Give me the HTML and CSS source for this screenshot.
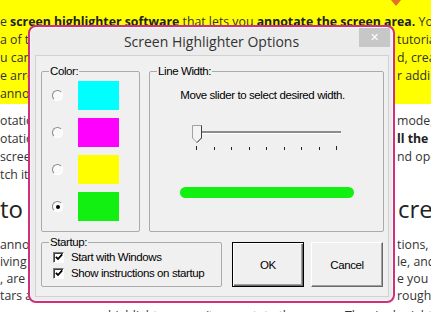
FILE: index.html
```html
<!DOCTYPE html>
<html lang="en">
<head>
  <meta charset="UTF-8">
  <title>Screen Highlighter Options</title>
  <link rel="stylesheet" href="styles.css">
</head>
<body>
  <div class="page">
    <div class="arrow"></div>

    <!-- article behind the dialog -->
    <div class="hilite">
      <p class="ln full">e <b>screen highlighter software</b> that lets you <b>annotate the screen area.</b> You</p>
      <p class="ln"><span>a of the screen</span><span class="r">tutorial</span></p>
      <p class="ln"><span>u can draw</span><span class="r">d, create</span></p>
      <p class="ln"><span>e arrows</span><span class="r">r adding</span></p>
      <p class="ln"><span>annotations</span></p>
    </div>

    <div class="para first">
      <p class="ln"><span>otation mode</span><span class="r">mode,</span></p>
      <p class="ln"><span>otation</span><b class="r">ll the</b></p>
      <p class="ln"><span>screen</span><span class="r">nd open</span></p>
      <p class="ln"><span>tch it</span></p>
    </div>

    <h2 class="ln head"><span>to use</span><span class="r">creen</span></h2>

    <div class="para third">
      <p class="ln"><span>annotate</span><span class="r">tions,</span></p>
      <p class="ln"><span>iving the</span><span class="r">le, and</span></p>
      <p class="ln"><span>, are the</span><span class="r">e you</span></p>
      <p class="ln"><span>tars a</span><span class="r">rough</span></p>
      <p class="ln full last">highlighter users/to annotate the screen. The single right-b</p>
    </div>

    <!-- options dialog -->
    <div class="dialog">
      <div class="titlebar">
        <span></span>
        <span class="title">Screen Highlighter Options</span>
        <span class="close">&#x2715;</span>
      </div>

      <div class="client">
        <div class="top-row">
          <fieldset class="group colors">
            <legend>Color:</legend>
            <div class="swatch-row"><span class="radio"></span><span class="swatch cyan"></span></div>
            <div class="swatch-row"><span class="radio"></span><span class="swatch magenta"></span></div>
            <div class="swatch-row"><span class="radio"></span><span class="swatch yellow"></span></div>
            <div class="swatch-row"><span class="radio on"></span><span class="swatch green"></span></div>
          </fieldset>

          <fieldset class="group width">
            <legend>Line Width:</legend>
            <p class="hint">Move slider to select desired width.</p>
            <svg class="slider" width="233" height="30" viewBox="0 0 233 30">
              <rect x="51" y="9" width="140" height="2" fill="#8c8c8c"/>
              <rect x="51" y="11" width="140" height="1" fill="#ffffff"/>
              <g fill="#222">
                <rect x="46" y="24" width="1" height="4"/>
                <rect x="64" y="25" width="1" height="3"/>
                <rect x="81" y="25" width="1" height="3"/>
                <rect x="99" y="25" width="1" height="3"/>
                <rect x="116" y="25" width="1" height="3"/>
                <rect x="134" y="25" width="1" height="3"/>
                <rect x="151" y="25" width="1" height="3"/>
                <rect x="169" y="25" width="1" height="3"/>
                <rect x="186" y="24" width="1" height="4"/>
              </g>
              <polygon points="42.5,3.5 51.5,3.5 51.5,16 47,20.5 42.5,16" fill="#f4f4f4" stroke="#a0a0a0"/>
              <polyline points="51.5,3.5 51.5,16 47,20.5" fill="none" stroke="#404040"/>
            </svg>
            <div class="bar"></div>
          </fieldset>
        </div>

        <div class="bottom-row">
          <fieldset class="group startup">
            <legend>Startup:</legend>
            <label class="check"><span class="box"><svg width="8" height="8" viewBox="0 0 8 8"><polyline points="0.8,3.8 3,6 7.2,1.4" fill="none" stroke="#000" stroke-width="1.8"/></svg></span>Start with Windows</label>
            <label class="check"><span class="box"><svg width="8" height="8" viewBox="0 0 8 8"><polyline points="0.8,3.8 3,6 7.2,1.4" fill="none" stroke="#000" stroke-width="1.8"/></svg></span>Show instructions on startup</label>
          </fieldset>
          <button class="btn default">OK</button>
          <button class="btn">Cancel</button>
        </div>
      </div>
    </div>
  </div>
</body>
</html>
```

FILE: styles.css
```css
* {
  margin: 0;
  padding: 0;
  box-sizing: border-box;
}

body {
  background: #fff;
}

.page {
  position: relative;
  width: 431px;
  height: 312px;
  overflow: hidden;
  font-family: 'Open Sans', 'Liberation Sans', sans-serif;
  font-size: 12.3px;
  color: #333;
}

.arrow {
  position: absolute;
  left: 391px;
  top: 0;
  width: 0;
  height: 0;
  border-left: 5px solid transparent;
  border-right: 5px solid transparent;
  border-top: 6px solid #e4702c;
}

/* article text */
.ln {
  display: flex;
  height: 18px;
  line-height: 18px;
  white-space: nowrap;
}

.ln.full {
  display: block;
}

.ln .r {
  margin-left: auto;
  width: 34px;
}

.ln b {
  color: #222;
}

.hilite {
  background: #ffff00;
  padding: 13px 0 1px;
  height: 104px;
}

.para.first {
  margin-top: 8px;
}

.head {
  margin-top: 11px;
  height: 28px;
  line-height: 28px;
  font-size: 24px;
  font-weight: 400;
  color: #222;
}

.head .r {
  width: 33px;
}

.para.third {
  margin-top: 13px;
}

.third .ln {
  height: 17px;
  line-height: 17px;
}

.ln.last {
  margin-top: 3px;
  padding-left: 108px;
}

/* dialog */
.dialog {
  position: absolute;
  left: 28px;
  top: 25px;
  width: 367px;
  height: 278px;
  border: 2px solid #cf2f7c;
  border-radius: 8px;
  background: #ececec;
  box-shadow: inset 0 0 0 1px #f8f8f8;
  display: flex;
  flex-direction: column;
}

.titlebar {
  height: 28px;
  display: grid;
  grid-template-columns: 1fr auto 1fr;
  align-items: start;
}

.title {
  font-family: 'Open Sans', sans-serif;
  font-size: 14px;
  color: #333;
  line-height: 28px;
  padding-top: 1px;
}

.close {
  justify-self: end;
  margin: 1px 3px 0 0;
  width: 31px;
  height: 19px;
  background: #c7c7c7;
  color: #fff;
  font-size: 11px;
  line-height: 19px;
  text-align: center;
  font-weight: 700;
  font-family: 'DejaVu Sans', sans-serif;
}

.client {
  flex: 1;
  margin: 0 4px 4px 5px;
  border: 1px solid #d2d2d2;
  background: #f0f0f0;
  padding: 9px 4px 0 5px;
  font-family: 'Liberation Sans', sans-serif;
  font-size: 11.5px;
  letter-spacing: -0.4px;
  color: #000;
  white-space: nowrap;
}

.top-row {
  display: flex;
  gap: 9px;
}

.bottom-row {
  display: flex;
  margin-top: 4px;
}

.group {
  border: 1px solid #aaa;
  border-radius: 2px;
  min-width: 0;
  padding: 0;
}

.group legend {
  margin-left: 7px;
  padding: 0 1px;
  line-height: 12px;
}

.colors {
  width: 99px;
  height: 167px;
  padding-top: 4px;
  display: flex;
  flex-direction: column;
  gap: 8px;
}

.swatch-row {
  display: flex;
  align-items: center;
  padding-left: 10px;
}

.radio {
  width: 11px;
  height: 11px;
  border-radius: 50%;
  border: 1px solid;
  border-color: #8a8a8a #fff #fff #8a8a8a;
  background: #fafafa;
  display: flex;
  align-items: center;
  justify-content: center;
}

.radio.on::after {
  content: "";
  width: 4px;
  height: 4px;
  border-radius: 50%;
  background: #000;
}

.swatch {
  width: 41px;
  height: 29px;
  margin-left: 15px;
}

.cyan { background: #00ffff; }
.magenta { background: #ff00ff; }
.yellow { background: #ffff00; }
.green { background: #11f011; }

.width {
  width: 235px;
  height: 167px;
}

.hint {
  margin-top: 12px;
  text-align: center;
  line-height: 12px;
  padding-right: 8px;
}

.slider {
  display: block;
  margin-top: 21px;
}

.bar {
  width: 174px;
  height: 11px;
  margin: 35px auto 0;
  border-radius: 6px;
  background: #11f011;
}

.startup {
  width: 181px;
  height: 51px;
  padding-top: 1px;
}

.check {
  display: flex;
  align-items: center;
  height: 16px;
  gap: 7px;
  padding-left: 11px;
}

.box {
  width: 11px;
  height: 11px;
  background: #fff;
  border: 1px solid;
  border-color: #7a7a7a #fff #fff #7a7a7a;
  box-shadow: inset 1px 1px 0 #404040;
  display: flex;
  align-items: center;
  justify-content: center;
}

.btn {
  width: 72px;
  height: 45px;
  margin-top: 6px;
  font: inherit;
  letter-spacing: inherit;
  color: #000;
  background: #f0f0f0;
  border: 1px solid;
  border-color: #fff #696969 #696969 #fff;
  box-shadow: inset -1px -1px 0 #a0a0a0;
  margin-left: 7px;
}

.btn.default {
  margin-left: 10px;
  border: 1px solid #000;
  box-shadow: inset 1px 1px 0 #fff, inset -1px -1px 0 #696969, inset -2px -2px 0 #a0a0a0;
}
```
